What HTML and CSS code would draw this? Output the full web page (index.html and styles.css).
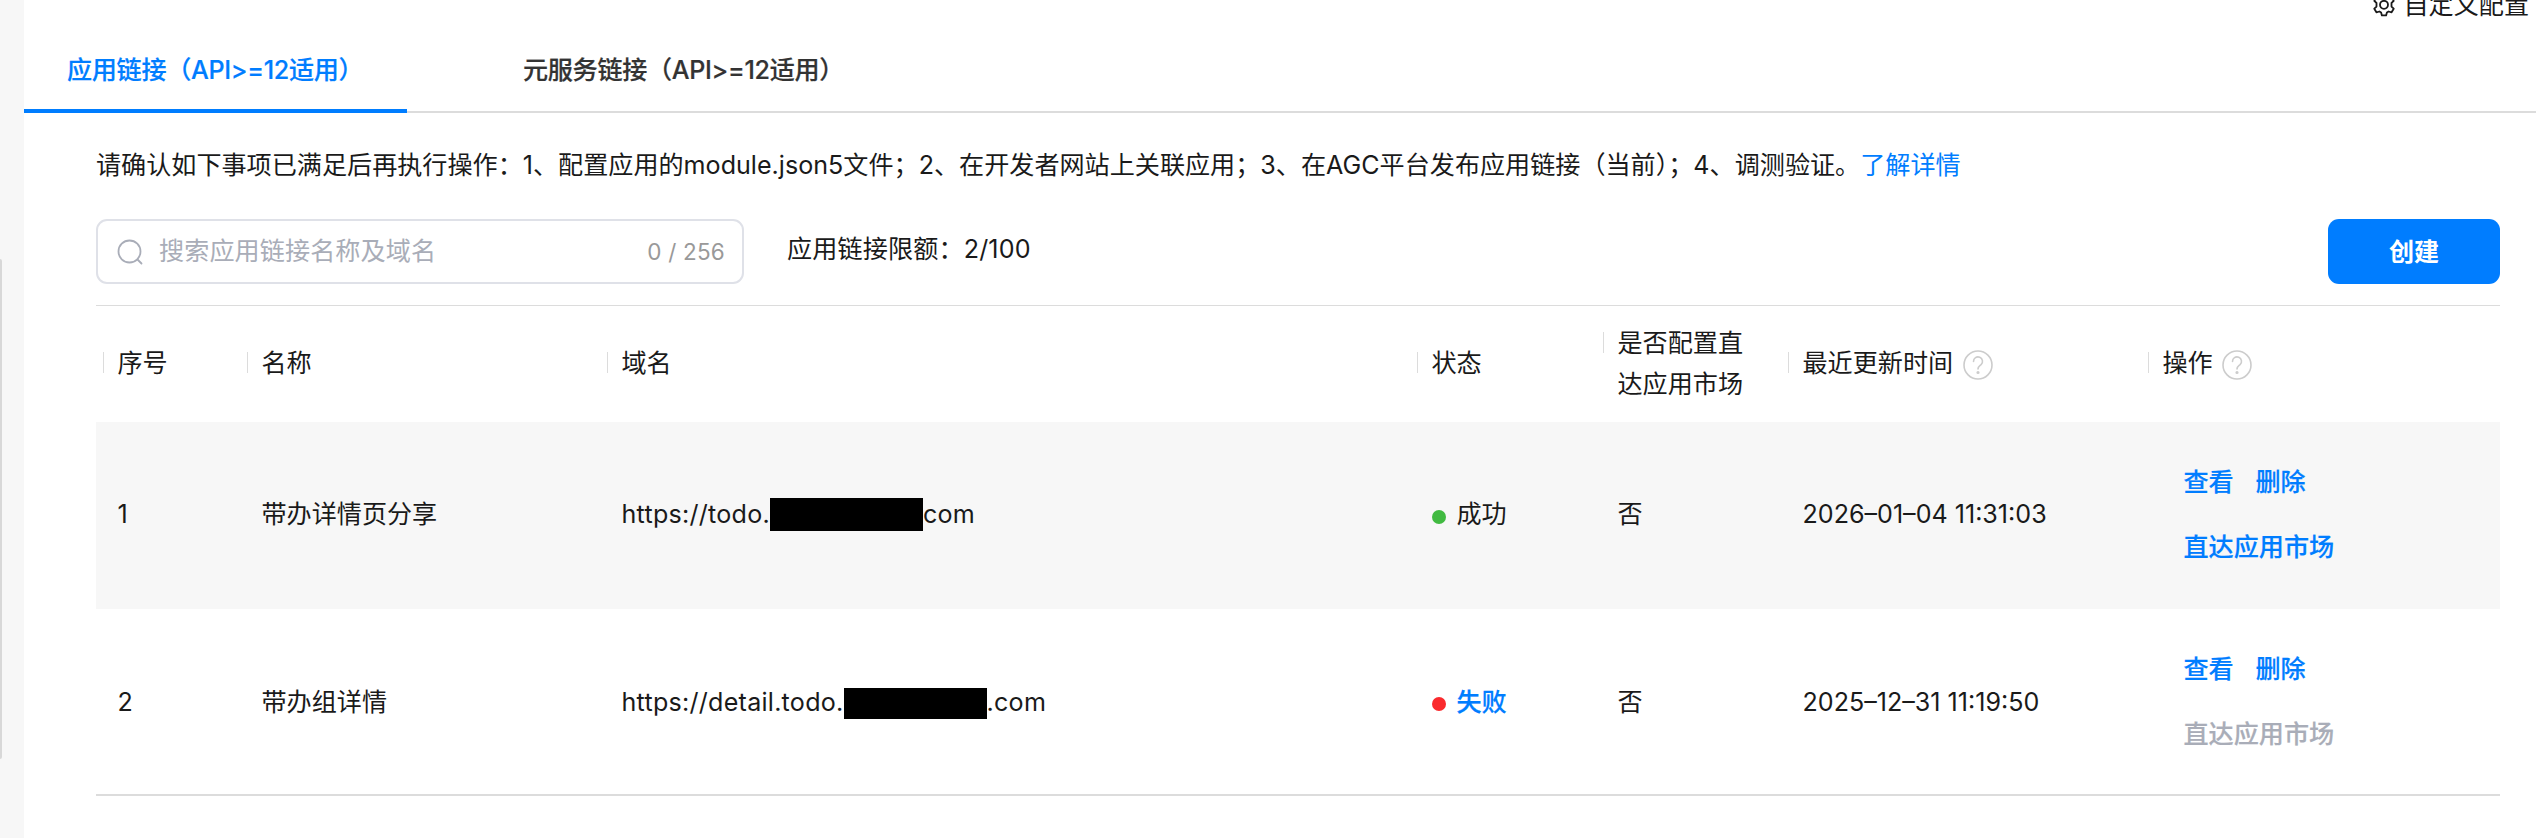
FILE: index.html
```html
<!DOCTYPE html>
<html lang="zh-CN">
<head>
    <meta charset="UTF-8">
    <title>应用链接</title>
    <link rel="stylesheet" href="styles.css">
</head>
<body>
    <aside class="side">
        <div class="scrollbar"></div>
    </aside>

    <main class="main">
        <!-- 顶部配置 -->
        <div class="top-bar">
            <svg class="gear" viewBox="0 0 22 24" fill="none" stroke="#1a1a1a" stroke-width="1.8" stroke-linejoin="round">
                <path d="M8.9 1.2h4.2l.8 2.9 1.7 1 3-.8 2.1 3.6-2.2 2.1v3.600l2.200 2.100-2.100 3.600-3-.8-1.700 1-.8 2.900H8.900l-.8-2.900-1.700-1-3 .8-2.100-3.600L3.500 13.600V10L1.300 7.900l2.100-3.600 3 .8 1.700-1z"/>
                <circle cx="11" cy="11.800" r="4"/>
            </svg>
            <span>自定义配置</span>
        </div>

        <!-- 标签页 -->
        <nav class="tabs">
            <a class="tab active">应用链接（API&gt;=12适用）</a>
            <a class="tab">元服务链接（API&gt;=12适用）</a>
        </nav>

        <section class="content">
            <p class="tips">请确认如下事项已满足后再执行操作：1、配置应用的module.json5文件；2、在开发者网站上关联应用；3、在AGC平台发布应用链接（当前）；4、调测验证。<a class="link">了解详情</a></p>

            <!-- 搜索栏 -->
            <div class="toolbar">
                <div class="search">
                    <svg class="search-icon" viewBox="0 0 26 26" fill="none" stroke="#a9adb8" stroke-width="1.8" stroke-linecap="round">
                        <circle cx="12.500" cy="12.500" r="11"/>
                        <path d="M20.500 20.500l4 4"/>
                    </svg>
                    <span class="placeholder">搜索应用链接名称及域名</span>
                    <span class="count">0 / 256</span>
                </div>
                <span class="quota">应用链接限额：2/100</span>
                <button class="create">创建</button>
            </div>

            <!-- 链接列表 -->
            <table class="list">
                <colgroup>
                    <col class="col-no"><col class="col-name"><col class="col-domain"><col class="col-status"><col class="col-direct"><col class="col-time"><col>
                </colgroup>
                <thead>
                    <tr>
                        <th><div class="head">序号</div></th>
                        <th><div class="head">名称</div></th>
                        <th><div class="head">域名</div></th>
                        <th><div class="head">状态</div></th>
                        <th><div class="head">是否配置直<br>达应用市场</div></th>
                        <th><div class="head">最近更新时间<svg class="help" viewBox="0 0 30 30" fill="none" stroke="#ccc" stroke-width="1.6" stroke-linecap="round"><circle cx="15" cy="15" r="14"/><path d="M10.500 11.500a4.500 4.500 0 1 1 7.600 3.200c-1.700 1.500-3.100 2.100-3.100 4.300"/><circle cx="15" cy="22.500" r=".8" fill="#ccc"/></svg></div></th>
                        <th><div class="head">操作<svg class="help" viewBox="0 0 30 30" fill="none" stroke="#ccc" stroke-width="1.6" stroke-linecap="round"><circle cx="15" cy="15" r="14"/><path d="M10.500 11.500a4.500 4.500 0 1 1 7.600 3.200c-1.700 1.500-3.100 2.100-3.100 4.300"/><circle cx="15" cy="22.500" r=".8" fill="#ccc"/></svg></div></th>
                    </tr>
                </thead>
                <tbody>
                    <tr class="striped">
                        <td>1</td>
                        <td>带办详情页分享</td>
                        <td><div class="domain"><span>https://todo.</span><i class="mask mask-long"></i><span>com</span></div></td>
                        <td><div class="status"><i class="dot success"></i>成功</div></td>
                        <td>否</td>
                        <td class="time">2026–01–04 11:31:03</td>
                        <td>
                            <div class="actions">
                                <a>查看</a><a>删除</a>
                                <a class="wide">直达应用市场</a>
                            </div>
                        </td>
                    </tr>
                    <tr class="last">
                        <td>2</td>
                        <td>带办组详情</td>
                        <td><div class="domain"><span>https://detail.todo.</span><i class="mask mask-short"></i><span>.com</span></div></td>
                        <td><div class="status"><i class="dot fail"></i><a class="link strong">失败</a></div></td>
                        <td>否</td>
                        <td class="time">2025–12–31 11:19:50</td>
                        <td class="action-cell">
                            <div class="actions">
                                <a>查看</a><a>删除</a>
                                <a class="wide disabled">直达应用市场</a>
                            </div>
                        </td>
                    </tr>
                </tbody>
            </table>
        </section>
    </main>
</body>
</html>
```
FILE: styles.css
```css
* {
    box-sizing: border-box;
}
body {
    margin: 0;
    height: 838px;
    display: flex;
    overflow: hidden;
    background: #fff;
    color: #1a1a1a;
    font-family: Inter, "Noto Sans CJK SC", sans-serif;
    font-size: 25.1px;
    line-height: 41px;
    white-space: nowrap;
}
.side {
    width: 24px;
    padding-top: 259px;
    background: #f7f7f7;
}
.scrollbar {
    width: 2px;
    height: 500px;
    background: #d8d8d8;
    border-radius: 0 2px 2px 0;
}
.main {
    flex: 1;
}
.top-bar {
    height: 27px;
    padding-right: 7px;
    display: flex;
    justify-content: flex-end;
    gap: 9px;
}
.top-bar span {
    margin-top: -15px;
}
.gear {
    width: 22px;
    height: 24px;
    margin-top: -7px;
}
.tabs {
    height: 86px;
    display: flex;
    border-bottom: 2px solid #dcdcdc;
}
.tab {
    height: 86px;
    padding: 23px 43px 0;
    font-weight: 500;
    letter-spacing: -0.3px;
    color: #333;
    -webkit-text-stroke: 0.2px;
}
.tab.active {
    width: 383px;
    margin-right: 73px;
    color: #007dff;
    border-bottom: 4px solid #007dff;
}
.content {
    padding: 32px 36px 0 72px;
}
.tips {
    margin: 0;
    letter-spacing: 0.01px;
}
.link {
    color: #007dff;
}
.strong {
    font-weight: 500;
    -webkit-text-stroke: 0.2px;
}
.toolbar {
    height: 65px;
    margin-top: 33px;
    display: flex;
    align-items: center;
}
.search {
    width: 648px;
    height: 65px;
    padding: 0 17px 0 19px;
    display: flex;
    align-items: center;
    border: 2px solid #dfe1e8;
    border-radius: 11px;
    color: #a9adb8;
}
.search-icon {
    width: 26px;
    height: 26px;
    margin-right: 16px;
}
.placeholder {
    margin-top: -1px;
    letter-spacing: 0.1px;
}
.count {
    margin-left: auto;
    font-size: 22.5px;
    letter-spacing: 0.2px;
    color: #999;
}
.quota {
    margin: -4px auto 0 43px;
    letter-spacing: 0.15px;
}
.create {
    width: 172px;
    height: 65px;
    padding: 0 0 4px;
    border: 0;
    border-radius: 11px;
    background: #007dff;
    color: #fff;
    font: bold 25.1px Inter, "Noto Sans CJK SC", sans-serif;
}
.list {
    width: 100%;
    margin-top: 21px;
    table-layout: fixed;
    border-collapse: separate;
    border-spacing: 0;
    border-top: 1px solid #dcdcdc;
    border-bottom: 2px solid #dcdcdc;
}
.col-no { width: 144px; }
.col-name { width: 360px; }
.col-domain { width: 810px; }
.col-status { width: 186px; }
.col-direct { width: 185px; }
.col-time { width: 360px; }
.list th {
    height: 116px;
    padding: 0 0 1px 7px;
    text-align: left;
    font-weight: 400;
}
.head {
    display: flex;
    align-items: flex-start;
}
.head::before {
    content: "";
    width: 1px;
    height: 21px;
    margin: 9px 13.5px 0 0;
    background: #dcdcdc;
}
.help {
    width: 30px;
    height: 30px;
    margin: 7px 0 0 9.5px;
}
.list td {
    height: 187px;
    padding: 0 0 2px 21.5px;
}
.list .last td {
    height: 185px;
    padding-top: 2px;
    padding-bottom: 0;
}
.list .last .action-cell {
    padding-top: 0;
}
.striped td {
    background: #f7f7f7;
}
.domain,
.status {
    display: flex;
    align-items: center;
}
.domain {
    letter-spacing: 0.25px;
}
.mask {
    background: #000;
}
.mask-long {
    width: 153px;
    height: 33px;
}
.mask-short {
    width: 143px;
    height: 31px;
    margin-top: 2px;
}
.dot {
    width: 14px;
    height: 14px;
    margin: 4px 11px 0 0;
    border-radius: 50%;
}
.success { background: #41ba41; }
.fail {
    margin-top: 2px;
    background: #fa2a2d;
}
.actions {
    width: 180px;
    margin-left: 21px;
    display: flex;
    flex-wrap: wrap;
    gap: 24px 22px;
    color: #007dff;
    font-weight: 500;
    -webkit-text-stroke: 0.2px;
}
.actions a {
    width: 50px;
}
.actions .wide {
    width: 160px;
}
.actions .disabled {
    color: #a9adb8;
}
```
